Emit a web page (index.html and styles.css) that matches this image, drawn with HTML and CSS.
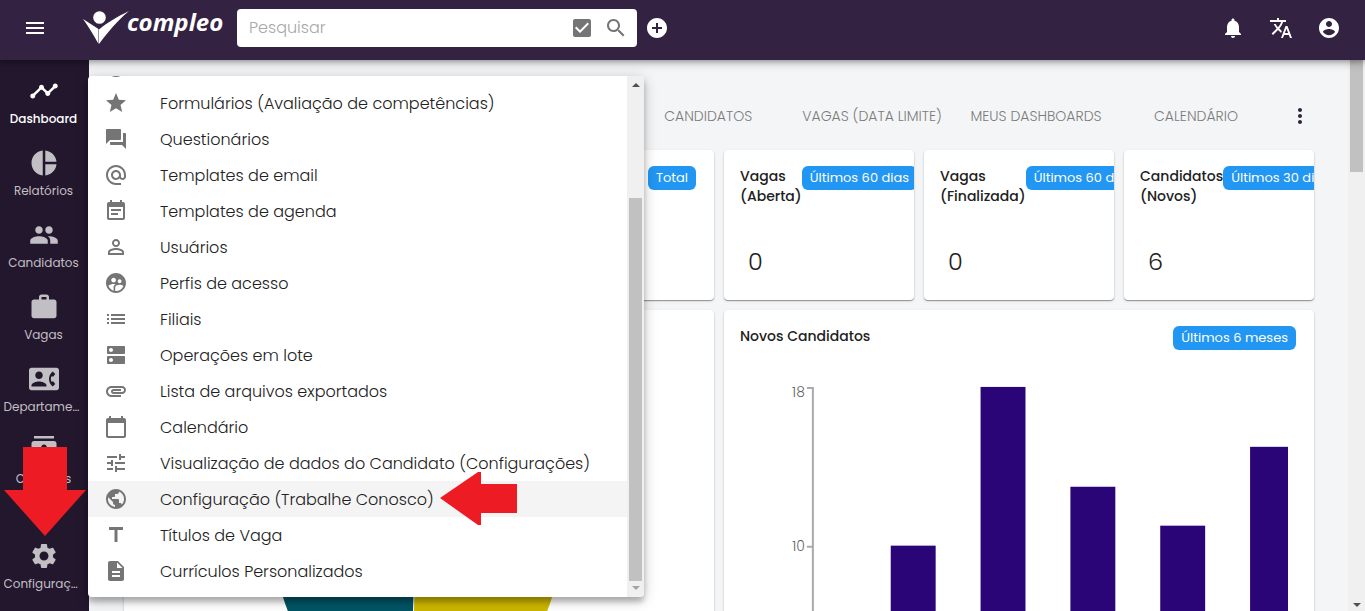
FILE: index.html
```html
<!DOCTYPE html>
<html lang="pt-BR">
<head>
<meta charset="utf-8">
<meta name="viewport" content="width=device-width, initial-scale=1">
<title>Compleo - Dashboard</title>
<link rel="stylesheet" href="styles.css">
</head>
<body>
<header class="topbar">
  <button class="icon-btn menu-toggle" aria-label="Menu"><svg class="icon" viewBox="0 0 24 24"><path d="M3 18h18v-2H3v2zm0-5h18v-2H3v2zm0-7v2h18V6H3z"/></svg></button>
  <a class="logo" href="#" aria-label="Compleo">
    <svg class="logo-mark" viewBox="0 0 46 34"><circle cx="16.500" cy="7.500" r="6.300"/><path d="M0 9L15.500 19V34C11 26 6 17 0 9z"/><path d="M46 1C34 11 25 22 16 34V19.500C25 12 34 7 46 1z"/></svg>
    <span class="logo-text">compleo</span>
  </a>
  <form class="search">
    <input class="search-input" type="text" placeholder="Pesquisar" aria-label="Pesquisar">
    <button class="icon-btn" type="button" aria-label="Filtro"><svg class="icon" viewBox="0 0 24 24"><path d="M19 3H5c-1.110 0-2 .9-2 2v14c0 1.100.89 2 2 2h14c1.110 0 2-.9 2-2V5c0-1.100-.89-2-2-2zm-9 14l-5-5 1.410-1.410L10 14.170l7.590-7.590L19 8l-9 9z"/></svg></button>
    <button class="icon-btn" type="button" aria-label="Buscar"><svg class="icon" viewBox="0 0 24 24"><path d="M15.500 14h-.79l-.28-.27C15.410 12.590 16 11.110 16 9.500 16 5.910 13.090 3 9.500 3S3 5.910 3 9.500 5.910 16 9.500 16c1.610 0 3.090-.59 4.230-1.570l.27.28v.79l5 4.990L20.490 19l-4.990-5zm-6 0C7.010 14 5 11.990 5 9.500S7.010 5 9.500 5 14 7.010 14 9.500 11.990 14 9.500 14z"/></svg></button>
  </form>
  <button class="icon-btn" aria-label="Adicionar"><svg class="icon" viewBox="0 0 24 24"><path d="M12 2C6.480 2 2 6.480 2 12s4.480 10 10 10 10-4.480 10-10S17.520 2 12 2zm5 11h-4v4h-2v-4H7v-2h4V7h2v4h4v2z"/></svg></button>
  <div class="actions">
    <button class="icon-btn" aria-label="Notificações"><svg class="icon" viewBox="0 0 24 24"><path d="M12 22c1.100 0 2-.9 2-2h-4c0 1.100.89 2 2 2zm6-6v-5c0-3.070-1.640-5.640-4.500-6.320V4c0-.83-.67-1.500-1.500-1.500s-1.500.67-1.500 1.500v.68C7.630 5.360 6 7.920 6 11v5l-2 2v1h16v-1l-2-2z"/></svg></button>
    <button class="icon-btn" aria-label="Idioma"><svg class="icon" viewBox="0 0 24 24"><path d="M12.870 15.070l-2.540-2.510.03-.03c1.740-1.940 2.980-4.170 3.710-6.530H17V4h-7V2H8v2H1v1.990h11.170C11.500 7.920 10.440 9.750 9 11.350 8.070 10.320 7.300 9.190 6.690 8h-2c.73 1.630 1.730 3.170 2.980 4.560l-5.090 5.020L4 19l5-5 3.110 3.110.76-2.040zM18.500 10h-2L12 22h2l1.120-3h4.750L21 22h2l-4.500-12zm-2.620 7l1.620-4.330L19.120 17h-3.240z"/></svg></button>
    <button class="icon-btn" aria-label="Conta"><svg class="icon" viewBox="0 0 24 24"><path d="M12 2C6.480 2 2 6.480 2 12s4.480 10 10 10 10-4.480 10-10S17.520 2 12 2zm0 3c1.660 0 3 1.340 3 3s-1.340 3-3 3-3-1.340-3-3 1.340-3 3-3zm0 14.200c-2.500 0-4.710-1.280-6-3.220.03-1.990 4-3.080 6-3.080 1.990 0 5.970 1.090 6 3.080-1.290 1.940-3.500 3.220-6 3.220z"/></svg></button>
  </div>
</header>

<div class="layout">
  <nav class="sidebar">
    <div class="side-list">
      <a class="side-item active" href="#"><svg class="side-icon" viewBox="0 0 24 24"><path d="M23 8c0 1.100-.9 2-2 2-.18 0-.35-.02-.51-.07l-3.560 3.550c.05.16.07.34.07.52 0 1.100-.9 2-2 2s-2-.9-2-2c0-.18.02-.36.07-.52l-2.550-2.550c-.16.05-.34.07-.52.07s-.36-.02-.52-.07l-4.550 4.560c.05.16.07.33.07.51 0 1.100-.9 2-2 2s-2-.9-2-2 .9-2 2-2c.18 0 .35.02.51.07l4.560-4.550C8.020 9.360 8 9.180 8 9c0-1.100.9-2 2-2s2 .9 2 2c0 .18-.02.36-.07.52l2.550 2.550c.16-.05.34-.07.52-.07s.36.02.52.07l3.550-3.560C19.020 8.350 19 8.180 19 8c0-1.100.9-2 2-2s2 .9 2 2z"/></svg><span class="side-label">Dashboard</span></a>
      <a class="side-item" href="#"><svg class="side-icon" viewBox="0 0 24 24"><path d="M11 2v20c-5.070-.5-9-4.790-9-10s3.930-9.500 9-10zm2.030 0v8.990H22c-.47-4.740-4.240-8.520-8.970-8.990zm0 11.010V22c4.740-.47 8.500-4.250 8.970-8.990h-8.970z"/></svg><span class="side-label">Relatórios</span></a>
      <a class="side-item" href="#"><svg class="side-icon" viewBox="0 0 24 24"><path d="M16 11c1.660 0 2.990-1.340 2.990-3S17.660 5 16 5s-3 1.340-3 3 1.340 3 3 3zm-8 0c1.660 0 2.990-1.340 2.990-3S9.660 5 8 5 5 6.340 5 8s1.340 3 3 3zm0 2c-2.330 0-7 1.170-7 3.500V19h14v-2.500c0-2.330-4.670-3.500-7-3.500zm8 0c-.29 0-.62.02-.97.05 1.160.84 1.970 1.970 1.970 3.450V19h6v-2.500c0-2.330-4.670-3.500-7-3.500z"/></svg><span class="side-label">Candidatos</span></a>
      <a class="side-item" href="#"><svg class="side-icon" viewBox="0 0 24 24"><path d="M20 6h-4V4c0-1.110-.89-2-2-2h-4c-1.110 0-2 .89-2 2v2H4c-1.110 0-1.990.89-1.990 2L2 19c0 1.110.89 2 2 2h16c1.110 0 2-.89 2-2V8c0-1.110-.89-2-2-2zm-6 0h-4V4h4v2z"/></svg><span class="side-label">Vagas</span></a>
      <a class="side-item" href="#"><svg class="side-icon" viewBox="0 0 24 24"><path d="M22 3H2C.9 3 0 3.900 0 5v14c0 1.100.9 2 2 2h20c1.100 0 1.990-.9 1.990-2L24 5c0-1.100-.9-2-2-2zM8 6c1.660 0 3 1.340 3 3s-1.340 3-3 3-3-1.340-3-3 1.340-3 3-3zm6 12H2v-1c0-2 4-3.100 6-3.100s6 1.100 6 3.100v1zm3.850-4h1.640L21 16l-1.990 1.990c-1.310-.98-2.280-2.380-2.730-3.990-.18-.64-.28-1.310-.28-2s.1-1.360.28-2c.45-1.620 1.420-3.010 2.730-3.990L21 8l-1.510 2h-1.640c-.22.63-.35 1.300-.35 2s.13 1.370.35 2z"/></svg><span class="side-label">Departamentos</span></a>
      <a class="side-item" href="#"><svg class="side-icon" viewBox="0 0 24 24"><path d="M20 0H4v2h16V0zM4 24h16v-2H4v2zM20 4H4c-1.100 0-2 .9-2 2v12c0 1.100.9 2 2 2h16c1.100 0 2-.9 2-2V6c0-1.100-.9-2-2-2zm-8 2.750c1.240 0 2.250 1.010 2.250 2.250s-1.010 2.250-2.250 2.250S9.750 10.240 9.750 9 10.760 6.750 12 6.750zM17 17H7v-1.500c0-1.670 3.330-2.500 5-2.500s5 .83 5 2.500V17z"/></svg><span class="side-label">Contatos</span></a>
    </div>
    <a class="side-item" href="#"><svg class="side-icon" viewBox="0 0 24 24"><path d="M19.140 12.940c.04-.3.06-.61.06-.94 0-.32-.02-.64-.07-.94l2.030-1.580c.18-.14.23-.41.12-.61l-1.920-3.320c-.12-.22-.37-.29-.59-.22l-2.390.96c-.5-.38-1.030-.7-1.620-.94l-.36-2.540c-.04-.24-.24-.41-.48-.41h-3.840c-.24 0-.43.17-.47.41l-.36 2.540c-.59.24-1.130.57-1.620.94l-2.390-.96c-.22-.08-.47 0-.59.22L2.740 8.870c-.12.21-.08.47.12.61l2.030 1.580c-.05.3-.09.63-.09.94s.02.64.07.94l-2.030 1.580c-.18.14-.23.41-.12.61l1.920 3.320c.12.22.37.29.59.22l2.390-.96c.5.38 1.030.7 1.620.94l.36 2.540c.05.24.24.41.48.41h3.840c.24 0 .44-.17.47-.41l.36-2.540c.59-.24 1.130-.56 1.620-.94l2.390.96c.22.08.47 0 .59-.22l1.920-3.320c.12-.22.07-.47-.12-.61l-2.010-1.580zM12 15.600c-1.980 0-3.600-1.620-3.600-3.600s1.620-3.600 3.600-3.600 3.600 1.620 3.600 3.600-1.620 3.600-3.600 3.600z"/></svg><span class="side-label">Configurações</span></a>
  </nav>

  <main class="content">
    <div class="tabs">
      <button class="tab">CANDIDATOS</button>
      <button class="tab">VAGAS (DATA LIMITE)</button>
      <button class="tab">MEUS DASHBOARDS</button>
      <button class="tab">CALENDÁRIO</button>
      <button class="icon-btn tabs-more" aria-label="Mais opções"><svg class="icon" viewBox="0 0 24 24"><path d="M12 8c1.100 0 2-.9 2-2s-.9-2-2-2-2 .9-2 2 .9 2 2 2zm0 2c-1.100 0-2 .9-2 2s.9 2 2 2 2-.9 2-2-.9-2-2-2zm0 6c-1.100 0-2 .9-2 2s.9 2 2 2 2-.9 2-2-.9-2-2-2z"/></svg></button>
    </div>
    <section class="stats">
      <article class="card stat stat-total"><div class="card-head head-end"><span class="badge">Total</span></div></article>
      <article class="card stat"><div class="card-head"><h2 class="card-title narrow">Vagas (Aberta)</h2><span class="badge">Últimos 60 dias</span></div><p class="stat-value">0</p></article>
      <article class="card stat"><div class="card-head"><h2 class="card-title narrow">Vagas (Finalizada)</h2><span class="badge">Últimos 60 dias</span></div><p class="stat-value">0</p></article>
      <article class="card stat"><div class="card-head"><h2 class="card-title narrow">Candidatos (Novos)</h2><span class="badge">Últimos 30 dias</span></div><p class="stat-value">6</p></article>
    </section>
    <section class="charts">
      <article class="card chart-card">
        <svg class="chart" viewBox="0 0 559 380"><path fill="#005566" d="M275 232L271 372A140 140 0 0 1 139 212z"/><path fill="#cdb700" d="M276 232L272 372A140 140 0 0 0 417 212z"/></svg>
      </article>
      <article class="card chart-card">
        <div class="card-head head-between"><h2 class="card-title">Novos Candidatos</h2><span class="badge">Últimos 6 meses</span></div>
        <svg class="chart" viewBox="0 0 559 300">
          <path class="axis" d="M67 38H73V300M67 197H73"/>
          <text class="axis-label" x="65" y="47">18</text>
          <text class="axis-label" x="65" y="201">10</text>
          <g class="bars"><rect x="151" y="196" width="45" height="110"/><rect x="241" y="37" width="45" height="270"/><rect x="331" y="137" width="45" height="170"/><rect x="421" y="176" width="45" height="130"/><rect x="511" y="97" width="38" height="210"/></g>
        </svg>
      </article>
    </section>
  </main>

  <div class="scrollbar page-scroll"><span class="page-thumb"></span><span class="arrow-down dark"></span></div>
</div>

<div class="menu">
  <ul class="menu-list">
    <li><a class="menu-item" href="#"><svg class="icon" viewBox="0 0 24 24"><circle cx="12" cy="12" r="10"/></svg></a></li>
    <li><a class="menu-item" href="#"><svg class="icon" viewBox="0 0 24 24"><path d="M12 17.270L18.180 21l-1.640-7.030L22 9.240l-7.190-.61L12 2 9.190 8.630 2 9.240l5.460 4.730L5.820 21z"/></svg>Formulários (Avaliação de competências)</a></li>
    <li><a class="menu-item" href="#"><svg class="icon" viewBox="0 0 24 24"><path d="M21 6h-2v9H6v2c0 .55.45 1 1 1h11l4 4V7c0-.55-.45-1-1-1zm-4 6V3c0-.55-.45-1-1-1H3c-.55 0-1 .45-1 1v14l4-4h10c.55 0 1-.45 1-1z"/></svg>Questionários</a></li>
    <li><a class="menu-item" href="#"><svg class="icon" viewBox="0 0 24 24"><path d="M12 2C6.480 2 2 6.480 2 12s4.480 10 10 10h5v-2h-5c-4.340 0-8-3.660-8-8s3.660-8 8-8 8 3.660 8 8v1.430c0 .79-.71 1.570-1.500 1.570s-1.500-.78-1.500-1.570V12c0-2.760-2.240-5-5-5s-5 2.240-5 5 2.240 5 5 5c1.380 0 2.640-.56 3.540-1.470.65.89 1.770 1.470 2.960 1.470 1.970 0 3.500-1.600 3.500-3.570V12c0-5.520-4.480-10-10-10zm0 13c-1.660 0-3-1.340-3-3s1.340-3 3-3 3 1.340 3 3-1.340 3-3 3z"/></svg>Templates de email</a></li>
    <li><a class="menu-item" href="#"><svg class="icon" viewBox="0 0 24 24"><path d="M17 10H7v2h10v-2zm2-7h-1V1h-2v2H8V1H6v2H5c-1.110 0-1.990.9-1.990 2L3 19c0 1.100.89 2 2 2h14c1.100 0 2-.9 2-2V5c0-1.100-.9-2-2-2zm0 16H5V8h14v11zm-5-5H7v2h7v-2z"/></svg>Templates de agenda</a></li>
    <li><a class="menu-item" href="#"><svg class="icon" viewBox="0 0 24 24"><path d="M12 5.900c1.160 0 2.100.94 2.100 2.100s-.94 2.100-2.100 2.100S9.900 9.160 9.900 8s.94-2.100 2.100-2.100m0 9c2.970 0 6.100 1.460 6.100 2.100v1.100H5.900V17c0-.64 3.130-2.100 6.100-2.100M12 4C9.790 4 8 5.790 8 8s1.790 4 4 4 4-1.790 4-4-1.790-4-4-4zm0 9c-2.670 0-8 1.340-8 4v3h16v-3c0-2.660-5.330-4-8-4z"/></svg>Usuários</a></li>
    <li><a class="menu-item" href="#"><svg class="icon" viewBox="0 0 24 24"><path d="M11.990 2c-5.520 0-10 4.480-10 10s4.480 10 10 10 10-4.480 10-10-4.480-10-10-10zm3.610 6.340c1.070 0 1.930.86 1.930 1.930s-.86 1.930-1.930 1.930-1.930-.86-1.930-1.930c-.01-1.070.86-1.930 1.930-1.930zm-6-1.580c1.300 0 2.360 1.060 2.360 2.360s-1.060 2.360-2.360 2.360-2.360-1.060-2.360-2.360c0-1.310 1.050-2.360 2.360-2.360zm0 9.130v3.750c-2.400-.75-4.300-2.600-5.140-4.960 1.050-1.120 3.670-1.690 5.140-1.690.53 0 1.200.08 1.900.22-1.640.87-1.900 2.020-1.900 2.680zM11.990 20c-.27 0-.53-.01-.79-.04v-4.070c0-1.420 2.940-2.130 4.400-2.130 1.070 0 2.920.39 3.840 1.150C18.280 17.880 15.390 20 11.990 20z"/></svg>Perfis de acesso</a></li>
    <li><a class="menu-item" href="#"><svg class="icon" viewBox="0 0 24 24"><path d="M3 13h2v-2H3v2zm0 4h2v-2H3v2zm0-8h2V7H3v2zm4 4h14v-2H7v2zm0 4h14v-2H7v2zM7 7v2h14V7H7z"/></svg>Filiais</a></li>
    <li><a class="menu-item" href="#"><svg class="icon" viewBox="0 0 24 24"><path d="M20 13H4c-.55 0-1 .45-1 1v6c0 .55.45 1 1 1h16c.55 0 1-.45 1-1v-6c0-.55-.45-1-1-1zM7 19c-1.100 0-2-.9-2-2s.9-2 2-2 2 .9 2 2-.9 2-2 2zM20 3H4c-.55 0-1 .45-1 1v6c0 .55.45 1 1 1h16c.55 0 1-.45 1-1V4c0-.55-.45-1-1-1zM7 9c-1.100 0-2-.9-2-2s.9-2 2-2 2 .9 2 2-.9 2-2 2z"/></svg>Operações em lote</a></li>
    <li><a class="menu-item" href="#"><svg class="icon" viewBox="0 0 24 24"><path d="M2 12.500C2 9.460 4.460 7 7.500 7H18c2.210 0 4 1.790 4 4s-1.790 4-4 4H9.500C8.120 15 7 13.880 7 12.500S8.120 10 9.500 10H17v2H9.410c-.55 0-.55 1 0 1H18c1.100 0 2-.9 2-2s-.9-2-2-2H7.500C5.570 9 4 10.570 4 12.500S5.570 16 7.500 16H17v2H7.500C4.460 18 2 15.540 2 12.500z"/></svg>Lista de arquivos exportados</a></li>
    <li><a class="menu-item" href="#"><svg class="icon" viewBox="0 0 24 24"><path d="M20 3h-1V1h-2v2H7V1H5v2H4c-1.100 0-2 .9-2 2v16c0 1.100.9 2 2 2h16c1.100 0 2-.9 2-2V5c0-1.100-.9-2-2-2zm0 18H4V8h16v13z"/></svg>Calendário</a></li>
    <li><a class="menu-item" href="#"><svg class="icon" viewBox="0 0 24 24"><path d="M3 17v2h6v-2H3zM3 5v2h10V5H3zm10 16v-2h8v-2h-8v-2h-2v6h2zM7 9v2H3v2h4v2h2V9H7zm14 4v-2H11v2h10zm-6-4h2V7h4V5h-4V3h-2v6z"/></svg>Visualização de dados do Candidato (Configurações)</a></li>
    <li><a class="menu-item hover" href="#"><svg class="icon" viewBox="0 0 24 24"><path d="M12 2C6.480 2 2 6.480 2 12s4.480 10 10 10 10-4.480 10-10S17.520 2 12 2zm-1 17.930c-3.950-.49-7-3.850-7-7.930 0-.62.08-1.210.21-1.790L9 15v1c0 1.100.9 2 2 2v1.930zm6.900-2.540c-.26-.81-1-1.390-1.900-1.390h-1v-3c0-.55-.45-1-1-1H8v-2h2c.55 0 1-.45 1-1V7h2c1.100 0 2-.9 2-2v-.41c2.930 1.190 5 4.060 5 7.410 0 2.080-.8 3.970-2.100 5.390z"/></svg>Configuração (Trabalhe Conosco)</a></li>
    <li><a class="menu-item" href="#"><svg class="icon" viewBox="0 0 24 24"><path d="M5 4v3h5.500v12h3V7H19V4z"/></svg>Títulos de Vaga</a></li>
    <li><a class="menu-item" href="#"><svg class="icon" viewBox="0 0 24 24"><path d="M14 2H6c-1.100 0-1.990.9-1.990 2L4 20c0 1.100.89 2 1.990 2H18c1.100 0 2-.9 2-2V8l-6-6zm2 16H8v-2h8v2zm0-4H8v-2h8v2zm-3-5V3.500L18.500 9H13z"/></svg>Currículos Personalizados</a></li>
  </ul>
  <div class="scrollbar menu-scroll"><span class="arrow-up"></span><span class="menu-thumb"></span><span class="arrow-down"></span></div>
</div>

<svg class="pointer pointer-down" viewBox="0 0 82 89"><path d="M19 0H63V43H82L41 89L0 43H19z"/></svg>
<svg class="pointer pointer-left" viewBox="0 0 77 53"><path d="M0 26L38 0H41V12H77V41H41V53H38z"/></svg>
</body>
</html>
```

FILE: styles.css
```css
* { box-sizing: border-box; }

body {
  margin: 0;
  height: 100vh;
  display: flex;
  flex-direction: column;
  overflow: hidden;
  background: #f4f5f7;
  color: #212121;
  font-family: Poppins, Inter, "Open Sans", sans-serif;
  font-size: 14px;
  font-weight: 400;
}

button {
  border: 0;
  padding: 0;
  background: none;
  font: inherit;
  color: inherit;
}

a { color: inherit; text-decoration: none; }

.icon {
  display: block;
  flex: none;
  width: 24px;
  height: 24px;
  fill: currentColor;
}

/* Top bar */
.topbar {
  position: relative;
  z-index: 2;
  flex: none;
  display: flex;
  align-items: center;
  height: 60px;
  padding: 0 24px 4px 23px;
  background: #332242;
  color: #fff;
  box-shadow: 0 2px 4px rgba(0, 0, 0, .2), 0 4px 8px rgba(0, 0, 0, .2);
}

.logo {
  display: flex;
  align-items: center;
  width: 154px;
  padding: 0 0 2px 36px;
}

.logo-mark { flex: none; width: 46px; height: 34px; fill: #fff; }

.logo-text {
  margin-left: -2px;
  padding-bottom: 10px;
  font: italic 700 24px/30px "Open Sans", sans-serif;
}

.search {
  display: flex;
  align-items: center;
  gap: 10px;
  width: 400px;
  height: 38px;
  margin: 0 8px 0 36px;
  padding: 0 9px 0 12px;
  border-radius: 4px;
  background: #fff;
  color: #757575;
}

.search-input {
  flex: 1;
  min-width: 0;
  padding: 0 0 2px;
  border: 0;
  outline: 0;
  background: none;
  font: inherit;
  font-size: 16px;
  font-weight: 300;
}

.search-input::placeholder { color: #a8a8a8; opacity: 1; }

.actions { display: flex; gap: 24px; margin-left: auto; }

/* Page frame */
.layout { flex: 1; min-height: 0; display: flex; }

.sidebar {
  flex: none;
  display: flex;
  flex-direction: column;
  width: 89px;
  padding: 10px 0 4px;
  background: #23172d;
  color: #c2bfc4;
}

.side-list { flex: 1; min-height: 0; overflow: hidden; }

.side-item {
  flex: none;
  display: flex;
  flex-direction: column;
  align-items: center;
  gap: 3px;
  width: 87px;
  height: 72px;
  padding: 6px 3px 0;
}

.side-item.active { color: #fff; font-weight: 500; }

.side-icon { flex: none; width: 30px; height: 30px; fill: currentColor; }

.side-label {
  max-width: 80px;
  overflow: hidden;
  text-overflow: ellipsis;
  white-space: nowrap;
  font-size: 12px;
  line-height: 20px;
}

.content { flex: 1; min-width: 0; padding: 32px 34px 0 35px; overflow: hidden; }

.tabs {
  display: flex;
  justify-content: flex-end;
  align-items: center;
  height: 48px;
  margin-bottom: 10px;
  color: #7b7b7b;
  font-weight: 300;
}

.tab { min-width: 160px; padding: 0 14px; white-space: nowrap; }

.tabs-more { margin: 0 2px 0 12px; color: #332242; }

.stats {
  display: grid;
  grid-template-columns: repeat(6, minmax(0, 1fr));
  gap: 10px;
  margin-bottom: 10px;
}

.charts { display: grid; grid-template-columns: 1fr 1fr; gap: 10px; }

.card {
  padding: 16px;
  border-radius: 4px;
  background: #fff;
  overflow: hidden;
  box-shadow: 0 1px 1px rgba(0, 0, 0, .35), 0 1px 3px rgba(0, 0, 0, .12);
}

.stat { height: 150px; }
.stat-total { grid-column-start: 3; }

.card-head { display: flex; align-items: flex-start; }
.head-end { justify-content: flex-end; padding-right: 2px; }
.head-between { justify-content: space-between; padding-right: 2px; }

.card-title {
  flex: none;
  margin: 0;
  font-size: 14px;
  font-weight: 500;
  line-height: 20px;
}

.narrow { width: min-content; }

.badge {
  flex: none;
  height: 24px;
  padding: 0 8px;
  border-radius: 6px;
  background: #2196f3;
  color: #fff;
  font-size: 13px;
  font-weight: 400;
  line-height: 24px;
  white-space: nowrap;
}

.stat-value {
  margin: 40px 0 0 8px;
  font-size: 24px;
  font-weight: 300;
  line-height: 32px;
}

.chart-card { height: 380px; }
.chart { display: block; width: 100%; }
.axis { fill: none; stroke: #aaa; stroke-width: 2; }
.axis-label { fill: #666; font-size: 14px; font-weight: 300; text-anchor: end; }
.bars { fill: #290578; }

/* Scroll tracks */
.scrollbar {
  flex: none;
  display: flex;
  flex-direction: column;
  align-items: center;
  width: 17px;
  background: #f0f0f0;
}

.page-scroll { justify-content: space-between; padding-bottom: 4px; }
.page-thumb { width: 13px; height: 112px; background: #c1c1c1; }

.arrow-up, .arrow-down {
  border: 4px solid transparent;
}

.arrow-up { border-top: 0; border-bottom-color: #505050; }
.arrow-down { border-bottom: 0; border-top-color: #a3a3a3; }
.arrow-down.dark { border-top-color: #505050; }

/* Settings menu */
.menu {
  position: absolute;
  z-index: 1;
  top: 76px;
  left: 88px;
  display: flex;
  width: 556px;
  height: 521px;
  border-radius: 4px;
  overflow: hidden;
  background: #fff;
  box-shadow: 0 5px 5px rgba(0, 0, 0, .2), 0 3px 14px rgba(0, 0, 0, .24);
}

.menu-list {
  flex: 1;
  min-width: 0;
  display: flex;
  flex-direction: column;
  justify-content: flex-end;
  margin: 0;
  padding: 0 0 8px;
  list-style: none;
}

.menu-item {
  display: flex;
  align-items: center;
  gap: 32px;
  height: 36px;
  padding: 0 16px;
  font-size: 16px;
  font-weight: 300;
  white-space: nowrap;
}

.menu-item .icon { color: #757575; }
.menu-item.hover { background: #f4f4f4; }

.menu-scroll { justify-content: space-between; padding: 7px 0; }
.menu-thumb { flex: 1; width: 13px; margin: 111px 0 5px; background: #c1c1c1; }

/* Callout arrows */
.pointer { position: absolute; z-index: 3; fill: #ed1c24; }
.pointer-down { top: 447px; left: 4px; width: 82px; height: 89px; }
.pointer-left { top: 472px; left: 440px; width: 77px; height: 53px; }
```
